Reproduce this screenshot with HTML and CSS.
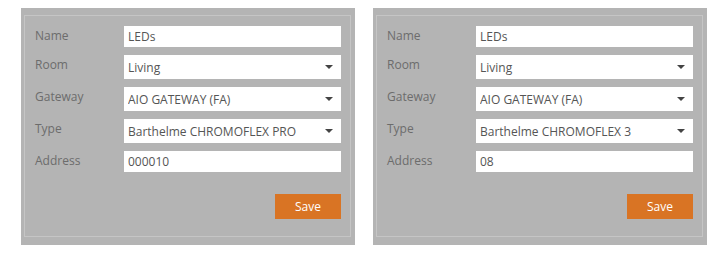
FILE: index.html
```html
<!DOCTYPE html>
<html lang="en">
	<head>
		<title>Device Settings</title>
		<meta charset="utf-8" name="viewport" content="width=device-width, initial-scale=1">
		<link rel="stylesheet" href="styles.css">
	</head>
	<body>
		<div class="panels">
			<div class="panel">
				<form class="device">
					<div class="row">
						<label for="name1">Name</label>
						<input type="text" id="name1" value="LEDs">
					</div>
					<div class="row">
						<label for="room1">Room</label>
						<div class="select">
							<select id="room1"><option>Living</option></select>
						</div>
					</div>
					<div class="row">
						<label for="gw1">Gateway</label>
						<div class="select">
							<select id="gw1"><option>AIO GATEWAY (FA)</option></select>
						</div>
					</div>
					<div class="row">
						<label for="type1">Type</label>
						<div class="select">
							<select id="type1"><option>Barthelme CHROMOFLEX PRO</option></select>
						</div>
					</div>
					<div class="row">
						<label for="addr1">Address</label>
						<input type="text" id="addr1" value="000010">
					</div>
					<div class="actions">
						<button type="button" class="save">Save</button>
					</div>
				</form>
			</div>
			<div class="panel">
				<form class="device">
					<div class="row">
						<label for="name2">Name</label>
						<input type="text" id="name2" value="LEDs">
					</div>
					<div class="row">
						<label for="room2">Room</label>
						<div class="select">
							<select id="room2"><option>Living</option></select>
						</div>
					</div>
					<div class="row">
						<label for="gw2">Gateway</label>
						<div class="select">
							<select id="gw2"><option>AIO GATEWAY (FA)</option></select>
						</div>
					</div>
					<div class="row">
						<label for="type2">Type</label>
						<div class="select">
							<select id="type2"><option>Barthelme CHROMOFLEX 3</option></select>
						</div>
					</div>
					<div class="row">
						<label for="addr2">Address</label>
						<input type="text" id="addr2" value="08">
					</div>
					<div class="actions">
						<button type="button" class="save">Save</button>
					</div>
				</form>
			</div>
		</div>
	</body>
</html>
```

FILE: styles.css
```css
* {box-sizing: border-box}

body, html {
	margin: 0;
	background-color: white;
	font-family: "Open Sans", "Liberation Sans", sans-serif;
	font-size: 12px;
}

/* Two device panels side by side */
.panels {
	display: flex;
	gap: 18px;
	padding: 8px 0 0 21px;
}

.panel {
	width: 334px;
	height: 237px;
	padding: 7px 4px 8px 3px;
	background-color: #b4b4b4;
}

.device {
	height: 100%;
	margin: 0;
	padding: 10px 9px 0 10px;
	border: 1px solid #c5c5c5;
}

/* Form rows */
.row {
	display: flex;
	margin-bottom: 8px;
}

.row label {
	width: 89px;
	padding-top: 1px;
	color: #6c6c6c;
	font-size: 12px;
	line-height: 18px;
}

.row input,
.row select {
	width: 217px;
	margin: 0;
	border: none;
	border-radius: 0;
	background-color: white;
	color: #555555;
	font-family: inherit;
	font-size: 12px;
	outline: none;
}

.row input {
	height: 21px;
	padding: 0 4px;
}

.select {
	position: relative;
}

.row select {
	display: block;
	height: 24px;
	padding: 0 4px;
	-webkit-appearance: none;
	appearance: none;
}

/* Dropdown arrow */
.select::after {
	content: "";
	position: absolute;
	top: 10px;
	right: 8px;
	border-left: 4px solid transparent;
	border-right: 4px solid transparent;
	border-top: 4px solid #444444;
}

.actions {
	display: flex;
	justify-content: flex-end;
	margin-top: 22px;
}

.save {
	width: 66px;
	height: 25px;
	border: none;
	background-color: #d97424;
	color: white;
	font-family: inherit;
	font-size: 12px;
	cursor: pointer;
}
```
